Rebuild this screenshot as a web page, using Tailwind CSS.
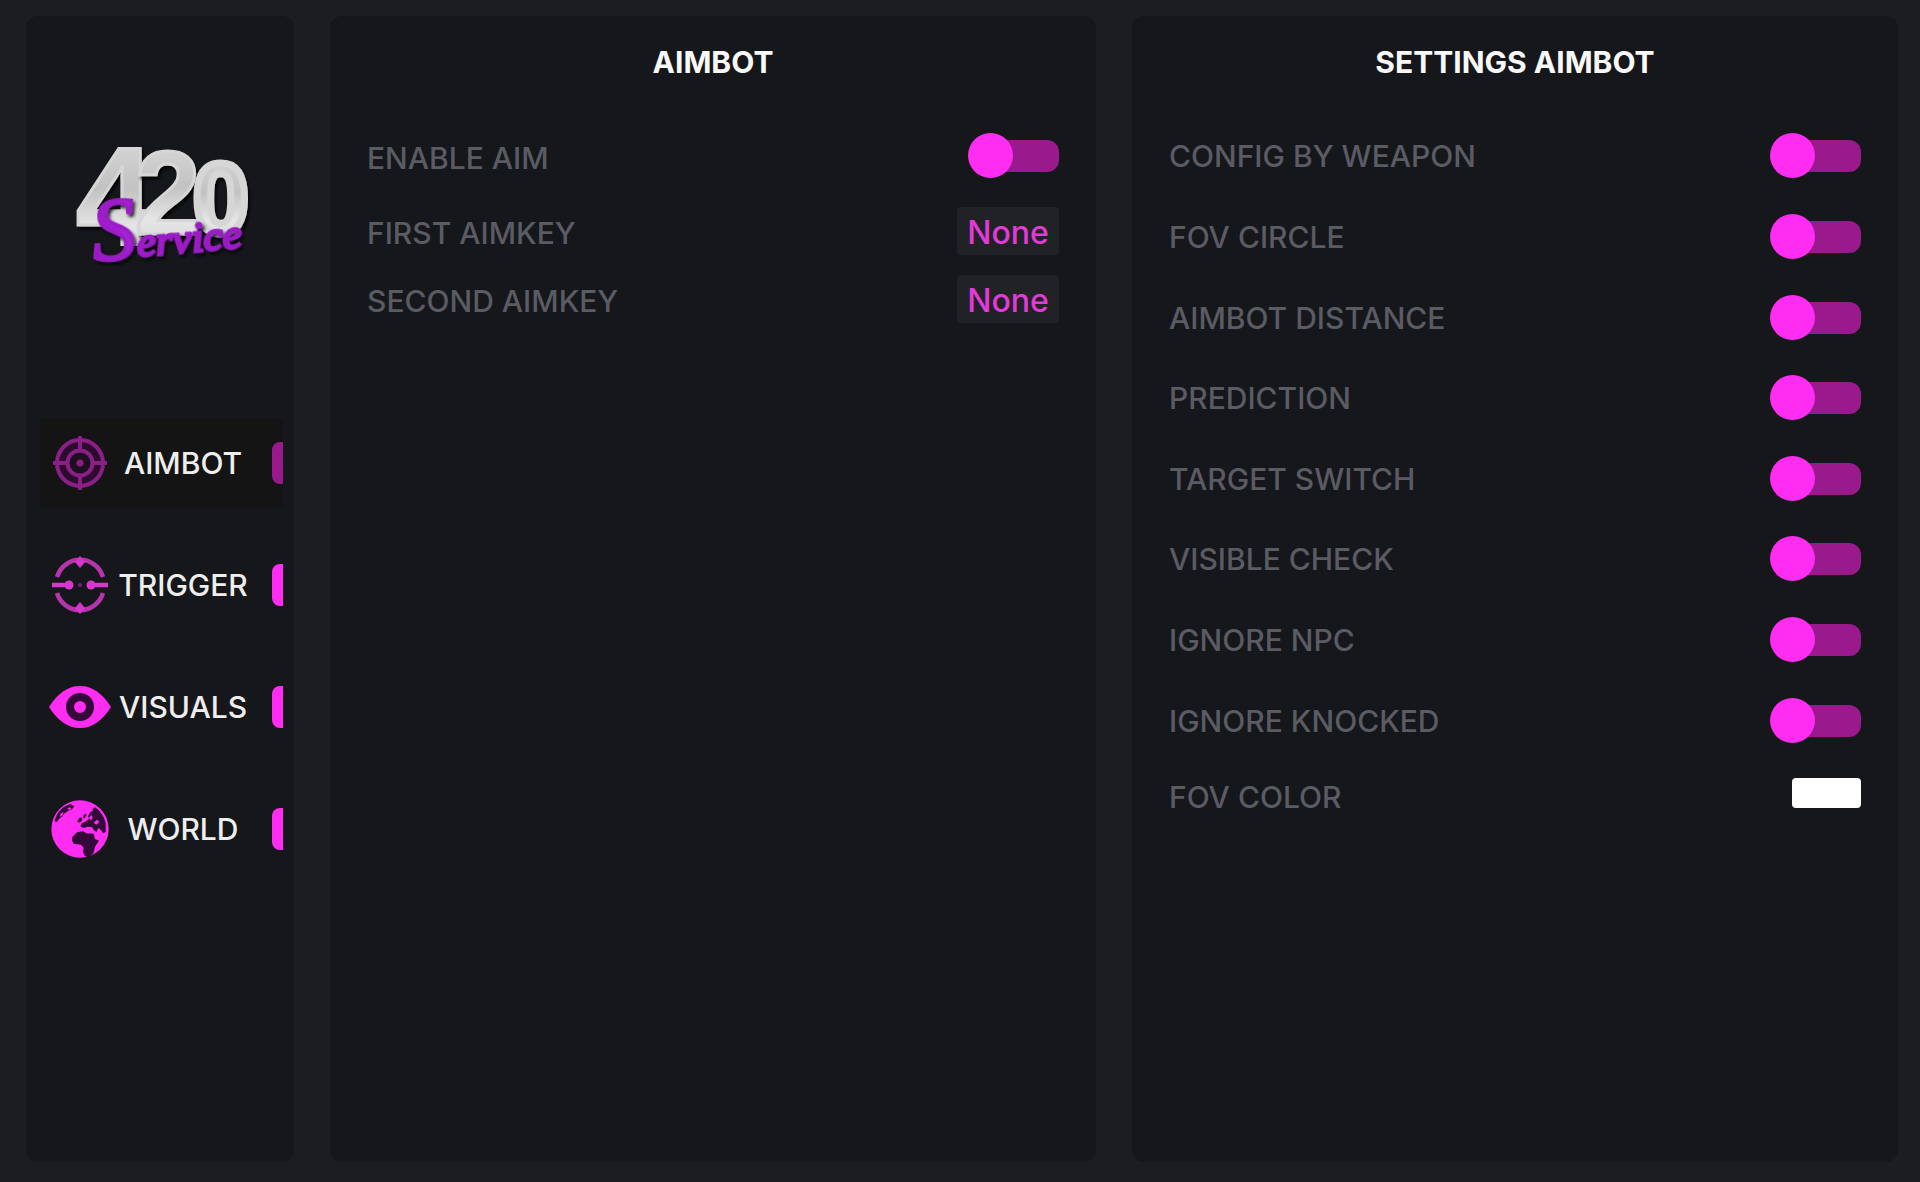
<!DOCTYPE html>
<html lang="en">
<head>
  <meta charset="UTF-8" />
  <meta name="viewport" content="width=device-width, initial-scale=1.0" />
  <title>420 Service</title>
  <script src="https://cdn.jsdelivr.net/npm/@tailwindcss/browser@4"></script>
</head>
<body class="min-h-screen flex gap-9 pt-4 pb-5 pl-[26px] pr-[22px] bg-[#1c1d22] font-[Inter,sans-serif] text-[30px] leading-8 font-medium text-[#5a5b63]">

  <!-- Sidebar -->
  <aside class="w-[268px] shrink-0 rounded-xl bg-[#16171b]">
    <div class="h-[402px] pt-[114px] pl-[34px]">
      <svg class="w-[210px] h-[150px] overflow-visible" viewBox="0 0 210 150" role="img" aria-label="420 Service">
        <defs>
          <linearGradient id="silver" x1="0" y1="0" x2="0" y2="1">
            <stop offset="0" stop-color="#dedede" />
            <stop offset="0.45" stop-color="#c2c2c2" />
            <stop offset="0.7" stop-color="#e6e6e6" />
            <stop offset="1" stop-color="#d0d0d0" />
          </linearGradient>
          <linearGradient id="violet" x1="0" y1="0" x2="1" y2="0">
            <stop offset="0" stop-color="#9a18c8" />
            <stop offset="0.5" stop-color="#b02be0" />
            <stop offset="1" stop-color="#8c1793" />
          </linearGradient>
          <filter id="shade" x="-20%" y="-20%" width="140%" height="150%">
            <feDropShadow dx="2" dy="3" stdDeviation="1.5" flood-color="#000" flood-opacity="0.8" />
          </filter>
        </defs>
        <g fill="url(#silver)" stroke="#d6d6d6" stroke-width="3" font-family="'Liberation Sans Narrow', 'Liberation Sans', sans-serif" font-weight="700">
          <text x="16" y="115" font-size="140" filter="url(#shade)">4</text>
          <text x="75" y="104" font-size="118" filter="url(#shade)">2</text>
          <text x="133" y="103" font-size="100" stroke-width="7" font-family="'Liberation Sans', sans-serif" filter="url(#shade)">0</text>
        </g>
        <text transform="rotate(-5 40 130)" x="34" y="130" font-family="'Liberation Serif', serif" font-style="italic" font-weight="400" fill="url(#violet)" stroke="#9a1cc4" stroke-width="3" filter="url(#shade)"><tspan font-size="88">S</tspan><tspan font-size="43">ervice</tspan></text>
      </svg>
    </div>

    <nav class="mx-[14px] mr-[11px] flex flex-col gap-8 text-[#eeeeee]">
      <button type="button" class="h-[90px] flex items-center bg-[#141414] rounded">
        <span class="w-20 shrink-0 flex justify-center">
          <svg class="w-14 h-14" viewBox="0 0 56 56" fill="none" stroke="#8a1f86" stroke-width="4">
            <circle cx="28" cy="28" r="23" fill="#2c0b2e" />
            <circle cx="28" cy="28" r="12.5" fill="#1c1020" />
            <path d="M28 1v14M28 41v14M1 28h14M41 28h14" />
            <circle cx="28" cy="28" r="3.5" fill="#8a1f86" stroke="none" />
          </svg>
        </span>
        <span class="w-[126px] shrink-0 flex justify-center">AIMBOT</span>
        <span class="ml-auto w-[11px] h-[42px] rounded-l-lg bg-[#9a1a8e]"></span>
      </button>
      <button type="button" class="h-[90px] flex items-center">
        <span class="w-20 shrink-0 flex justify-center">
          <svg class="w-[58px] h-[58px]" viewBox="0 0 58 58" fill="none" stroke="#b535ac" stroke-width="4.5">
            <path d="M6 21A24 24 0 0 1 52 21M6 37A24 24 0 0 0 52 37" />
            <path d="M1 29h17M40 29h17" stroke="#d836cc" />
            <path d="M29 0l5 6-5 6-5-6zM29 46l5 6-5 6-5-6z" fill="#d836cc" stroke="none" />
            <circle cx="18" cy="29" r="4.5" fill="#d836cc" stroke="none" />
            <circle cx="40" cy="29" r="4.5" fill="#d836cc" stroke="none" />
            <circle cx="29" cy="29" r="2" fill="#7a1f76" stroke="none" />
          </svg>
        </span>
        <span class="w-[126px] shrink-0 flex justify-center">TRIGGER</span>
        <span class="ml-auto w-[11px] h-[42px] rounded-l-lg bg-[#ff2cf2]"></span>
      </button>
      <button type="button" class="h-[90px] flex items-center">
        <span class="w-20 shrink-0 flex justify-center">
          <svg class="w-[62px] h-[44px]" viewBox="0 0 62 44">
            <path d="M0 22C9 8 19 1 31 1s22 7 31 21C53 36 43 43 31 43S9 36 0 22z" fill="#ff2cf2" />
            <circle cx="31" cy="22" r="10" fill="none" stroke="#35083a" stroke-width="8" />
          </svg>
        </span>
        <span class="w-[126px] shrink-0 flex justify-center">VISUALS</span>
        <span class="ml-auto w-[11px] h-[42px] rounded-l-lg bg-[#ff2cf2]"></span>
      </button>
      <button type="button" class="h-[90px] flex items-center">
        <span class="w-20 shrink-0 flex justify-center">
          <svg class="w-[58px] h-[58px]" viewBox="94 418 174 174">
            <circle cx="181" cy="505" r="86" fill="#ff2cf2" />
            <g fill="#35083a">
              <path d="M158 529l14-14 18-3 10 6 22 1 4 16 12 5-12 18-4 18-14 14-12-3-6-12 2-14-8-9-22-3-5-10z" />
              <path d="M218 446l8-6c16 11 28 28 32 48v26l-8 4-6-10-8-6-6 12-8-6-4-8-14-2-12 4-10-5 4-9 14-6 10-9-6-5 8-14 8-4z" />
              <path d="M177 474l8-5 3 9-8 8-7-3zM190 466l7-7 4 4-8 11z" />
              <path d="M136 437l16-7 12 7-7 9-12 5-12 8-6 9-9 6-6 10-7-2c4-19 14-34 31-45z" />
            </g>
            <path d="M122 460l10-7-3 10-8 6zM143 443l8-3 4 4-6 5zM222 486l10-9 7 6-9 9zM208 470l8-7 3 8-5 9z" fill="#ff2cf2" />
          </svg>
        </span>
        <span class="w-[126px] shrink-0 flex justify-center">WORLD</span>
        <span class="ml-auto w-[11px] h-[42px] rounded-l-lg bg-[#ff2cf2]"></span>
      </button>
    </nav>
  </aside>

  <!-- Aimbot -->
  <section class="flex-1 rounded-xl bg-[#16171b]">
    <h2 class="h-[92px] flex items-center justify-center text-[#f8f8f8] font-bold">AIMBOT</h2>
    <div class="px-[37px] pt-[25px]">
      <div class="h-[46px] flex items-center justify-between">
        <label for="enable-aim" class="pt-1">ENABLE AIM</label>
        <input id="enable-aim" type="checkbox" role="switch" class="appearance-none relative w-[91px] h-[46px] before:absolute before:left-6 before:right-0 before:top-[7px] before:h-8 before:rounded-r-xl before:bg-[#9a1a8e] after:absolute after:left-0 after:top-0 after:size-[45px] after:rounded-full after:bg-[#ff2cf2]" />
      </div>
      <div class="mt-7 h-12 flex items-center justify-between">
        <label for="first-key" class="pt-1">FIRST AIMKEY</label>
        <button id="first-key" type="button" class="w-[102px] h-12 pt-1 rounded bg-[#212226] text-[32px] text-[#e23ad6]">None</button>
      </div>
      <div class="mt-5 h-12 flex items-center justify-between">
        <label for="second-key" class="pt-1">SECOND AIMKEY</label>
        <button id="second-key" type="button" class="w-[102px] h-12 pt-1 rounded bg-[#212226] text-[32px] text-[#e23ad6]">None</button>
      </div>
    </div>
  </section>

  <!-- Settings -->
  <section class="flex-1 rounded-xl bg-[#16171b]">
    <h2 class="h-[92px] flex items-center justify-center text-[#f8f8f8] font-bold">SETTINGS AIMBOT</h2>
    <div class="px-[37px] pt-2">
      <div class="h-[645px] grid grid-rows-8">
        <div class="flex items-center justify-between">
          <label for="config-weapon">CONFIG BY WEAPON</label>
          <input id="config-weapon" type="checkbox" role="switch" class="appearance-none relative w-[91px] h-[46px] before:absolute before:left-6 before:right-0 before:top-[7px] before:h-8 before:rounded-r-xl before:bg-[#9a1a8e] after:absolute after:left-0 after:top-0 after:size-[45px] after:rounded-full after:bg-[#ff2cf2]" />
        </div>
        <div class="flex items-center justify-between">
          <label for="fov-circle">FOV CIRCLE</label>
          <input id="fov-circle" type="checkbox" role="switch" class="appearance-none relative w-[91px] h-[46px] before:absolute before:left-6 before:right-0 before:top-[7px] before:h-8 before:rounded-r-xl before:bg-[#9a1a8e] after:absolute after:left-0 after:top-0 after:size-[45px] after:rounded-full after:bg-[#ff2cf2]" />
        </div>
        <div class="flex items-center justify-between">
          <label for="aimbot-distance">AIMBOT DISTANCE</label>
          <input id="aimbot-distance" type="checkbox" role="switch" class="appearance-none relative w-[91px] h-[46px] before:absolute before:left-6 before:right-0 before:top-[7px] before:h-8 before:rounded-r-xl before:bg-[#9a1a8e] after:absolute after:left-0 after:top-0 after:size-[45px] after:rounded-full after:bg-[#ff2cf2]" />
        </div>
        <div class="flex items-center justify-between">
          <label for="prediction">PREDICTION</label>
          <input id="prediction" type="checkbox" role="switch" class="appearance-none relative w-[91px] h-[46px] before:absolute before:left-6 before:right-0 before:top-[7px] before:h-8 before:rounded-r-xl before:bg-[#9a1a8e] after:absolute after:left-0 after:top-0 after:size-[45px] after:rounded-full after:bg-[#ff2cf2]" />
        </div>
        <div class="flex items-center justify-between">
          <label for="target-switch">TARGET SWITCH</label>
          <input id="target-switch" type="checkbox" role="switch" class="appearance-none relative w-[91px] h-[46px] before:absolute before:left-6 before:right-0 before:top-[7px] before:h-8 before:rounded-r-xl before:bg-[#9a1a8e] after:absolute after:left-0 after:top-0 after:size-[45px] after:rounded-full after:bg-[#ff2cf2]" />
        </div>
        <div class="flex items-center justify-between">
          <label for="visible-check">VISIBLE CHECK</label>
          <input id="visible-check" type="checkbox" role="switch" class="appearance-none relative w-[91px] h-[46px] before:absolute before:left-6 before:right-0 before:top-[7px] before:h-8 before:rounded-r-xl before:bg-[#9a1a8e] after:absolute after:left-0 after:top-0 after:size-[45px] after:rounded-full after:bg-[#ff2cf2]" />
        </div>
        <div class="flex items-center justify-between">
          <label for="ignore-npc">IGNORE NPC</label>
          <input id="ignore-npc" type="checkbox" role="switch" class="appearance-none relative w-[91px] h-[46px] before:absolute before:left-6 before:right-0 before:top-[7px] before:h-8 before:rounded-r-xl before:bg-[#9a1a8e] after:absolute after:left-0 after:top-0 after:size-[45px] after:rounded-full after:bg-[#ff2cf2]" />
        </div>
        <div class="flex items-center justify-between">
          <label for="ignore-knocked">IGNORE KNOCKED</label>
          <input id="ignore-knocked" type="checkbox" role="switch" class="appearance-none relative w-[91px] h-[46px] before:absolute before:left-6 before:right-0 before:top-[7px] before:h-8 before:rounded-r-xl before:bg-[#9a1a8e] after:absolute after:left-0 after:top-0 after:size-[45px] after:rounded-full after:bg-[#ff2cf2]" />
        </div>
      </div>
      <div class="h-[72px] flex items-center justify-between">
        <label for="fov-color">FOV COLOR</label>
        <input id="fov-color" type="color" value="#ffffff" class="appearance-none mb-2 w-[69px] h-[30px] p-0 rounded overflow-hidden bg-white [&::-webkit-color-swatch-wrapper]:p-0 [&::-webkit-color-swatch]:border-0" />
      </div>
    </div>
  </section>

</body>
</html>
